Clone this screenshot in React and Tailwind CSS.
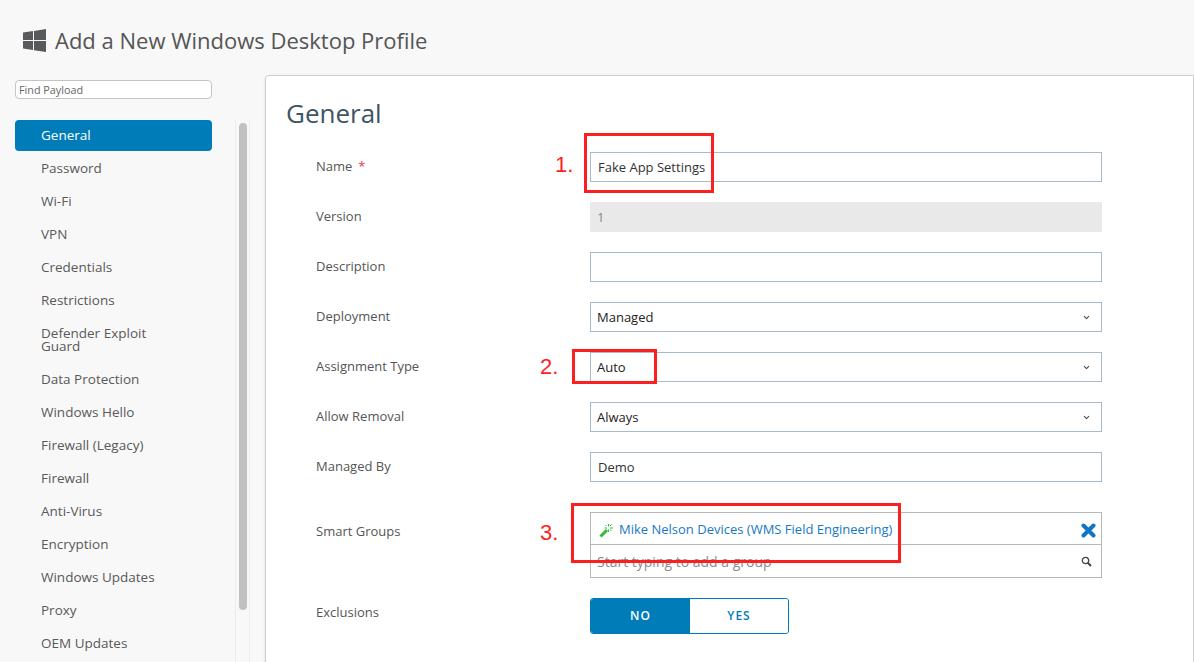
import { ChevronDown } from "lucide-react";

const payloads = [
  "General",
  "Password",
  "Wi-Fi",
  "VPN",
  "Credentials",
  "Restrictions",
  "Defender Exploit Guard",
  "Data Protection",
  "Windows Hello",
  "Firewall (Legacy)",
  "Firewall",
  "Anti-Virus",
  "Encryption",
  "Windows Updates",
  "Proxy",
  "OEM Updates",
];

const WindowsLogo = () => (
  <svg width="24" height="23" viewBox="0 0 24 23" fill="#58595b">
    <path d="M0 3.4 10 2v9H0zM11 1.9 23 0v11H11zM0 12h10v9L0 19.6zM11 12h12v11l-12-1.8z" />
  </svg>
);

const Wand = () => (
  <svg width="15" height="15" viewBox="0 0 15 15" fill="none" stroke="#2ebd3a">
    <path d="M1.5 13.5 8 7" strokeWidth="3" />
    <path d="M9.5 1v2.5M9.5 6.5V9M5.5 5h2.5M11 5h3M12.5 1.5l-1.5 1.5M12.5 8l-1.5-1.5M6.5 2l1 1" strokeWidth="1" />
  </svg>
);

const SearchIcon = () => (
  <svg width="11" height="11" viewBox="0 0 11 11" fill="none" stroke="#444">
    <circle cx="4.5" cy="4.5" r="3.2" strokeWidth="1.3" />
    <path d="M7 7l3 3" strokeWidth="2" />
  </svg>
);

const RemoveIcon = () => (
  <svg width="15" height="15" viewBox="0 0 15 15" fill="none" stroke="#0f75c4">
    <path d="M2.5 2.5l10 10M12.5 2.5l-10 10" strokeWidth="4" strokeLinecap="round" />
  </svg>
);

const Row = ({ label, required, children }) => (
  <div className="flex items-center h-[30px] mb-5">
    <div className="w-[274px] text-[13px] text-[#555]">
      {label}
      {required && <span className="text-[#f0334b] ml-1.5">*</span>}
    </div>
    <div className="w-[512px]">{children}</div>
  </div>
);

const TextBox = ({ children }) => (
  <div className="h-[30px] border border-[#a9bbc9] bg-white px-[7px] pt-0.5 flex items-center text-[13px] text-[#333]">{children}</div>
);

const SelectBox = ({ children }) => (
  <div className="h-[30px] border border-[#a9bbc9] bg-white pl-1.5 pr-[10px] flex items-center justify-between text-[13px] text-[#222]">
    <span className="pt-0.5">{children}</span>
    <ChevronDown size={9} strokeWidth={2.8} color="#444" />
  </div>
);

const Note = ({ className, children }) => (
  <div className={`absolute text-[#fc1f1f] text-[22px] leading-none font-['Liberation_Sans',sans-serif] ${className}`}>{children}</div>
);

export default function App() {
  return (
    <div className="relative h-[662px] overflow-hidden bg-[#f8f8f8] font-['Open_Sans',sans-serif]">
      <div className="flex items-center h-[75px] pl-[23px] pt-1.5">
        <WindowsLogo />
        <h1 className="ml-2 text-[22px] text-[#555]">Add a New Windows Desktop Profile</h1>
      </div>

      <div className="flex">
        <aside className="w-[265px] pl-[15px] shrink-0">
          <div className="w-[197px] h-[19px] mt-[5px] border border-[#c4c4c4] rounded bg-white px-[3px] pt-0.5 flex items-center text-[10.8px] text-[#666]">Find Payload</div>
          <div className="flex mt-[21px]">
            <nav className="w-[197px]">
              {payloads.map((p) => (
                <div
                  key={p}
                  className={
                    p === "General"
                      ? "h-[31px] mb-0.5 pl-[26px] flex items-center rounded bg-[#007db8] text-white text-[13.5px]"
                      : "min-h-[31px] mb-0.5 pl-[26px] pr-8 py-[9px] flex items-center leading-[13px] text-[13.5px] text-[#595959]"
                  }
                >
                  {p}
                </div>
              ))}
            </nav>
            <div className="ml-[23px] w-[15px] h-[560px] border-x border-[#ececec] pt-[3px] pl-[3px]">
              <div className="w-2 h-[487px] rounded bg-[#c1c1c1]" />
            </div>
          </div>
        </aside>

        <main className="flex-1 h-[600px] bg-white border border-[#cfcfcf] rounded-tl pl-5 pt-[19px] shadow-sm">
          <h2 className="text-[26px] leading-9 text-[#3f5464]">General</h2>
          <div className="mt-[21px] pl-[30px]">
            <Row label="Name" required>
              <TextBox>Fake App Settings</TextBox>
            </Row>
            <Row label="Version">
              <div className="h-[30px] bg-[#e9e9e9] px-[7px] pt-0.5 flex items-center text-[13px] text-[#888]">1</div>
            </Row>
            <Row label="Description">
              <TextBox />
            </Row>
            <Row label="Deployment">
              <SelectBox>Managed</SelectBox>
            </Row>
            <Row label="Assignment Type">
              <SelectBox>Auto</SelectBox>
            </Row>
            <Row label="Allow Removal">
              <SelectBox>Always</SelectBox>
            </Row>
            <Row label="Managed By">
              <TextBox>Demo</TextBox>
            </Row>
            <div className="flex items-start h-[66px] mt-[30px] mb-5">
              <div className="w-[274px] pt-2.5 text-[13px] text-[#555]">Smart Groups</div>
              <div className="w-[512px] border border-[#b9b9b9] bg-white">
                <div className="h-[32px] border-b border-[#b9b9b9] pl-2 pr-[5px] pt-[3px] flex items-center justify-between">
                  <span className="flex items-center gap-[5px] text-[13px] text-[#1779c4]">
                    <Wand />
                    Mike Nelson Devices (WMS Field Engineering)
                  </span>
                  <RemoveIcon />
                </div>
                <div className="h-[32px] px-[6px] pr-[9px] flex items-center justify-between text-[14px] text-[#8b8b8b]">
                  <span>Start typing to add a group</span>
                  <SearchIcon />
                </div>
              </div>
            </div>
            <div className="flex items-center h-9">
              <div className="w-[274px] text-[13px] text-[#555] -mt-[6px]">Exclusions</div>
              <div className="flex w-[199px] h-9 rounded-[3px] border border-[#007db8] overflow-hidden text-[12px] font-semibold tracking-[1px]">
                <div className="w-[99px] bg-[#007db8] text-white flex items-center justify-center">NO</div>
                <div className="flex-1 bg-white text-[#007db8] flex items-center justify-center">YES</div>
              </div>
            </div>
          </div>
        </main>
      </div>

      <div className="absolute left-[584px] top-[133px] w-[130px] h-[60px] border-[3px] border-[#fc1f1f]" />
      <div className="absolute left-[572px] top-[349px] w-[85px] h-[35px] border-[3px] border-[#fc1f1f]" />
      <div className="absolute left-[571px] top-[503px] w-[330px] h-[60px] border-[3px] border-[#fc1f1f]" />
      <Note className="left-[555px] top-[154px]">1.</Note>
      <Note className="left-[540px] top-[356px]">2.</Note>
      <Note className="left-[540px] top-[522px]">3.</Note>
    </div>
  );
}
